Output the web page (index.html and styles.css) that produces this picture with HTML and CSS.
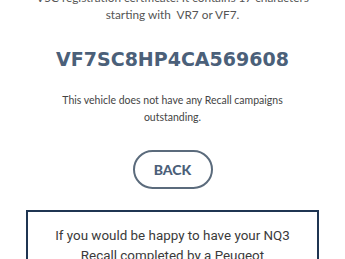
FILE: index.html
```html
<!DOCTYPE html>
<html lang="en">
<head>
    <meta charset="UTF-8">
    <meta name="viewport" content="width=device-width, initial-scale=1.0">
    <title>Recall check</title>
    <link rel="stylesheet" href="styles.css">
</head>
<body>
    <div class="page">
        <!-- VIN hint -->
        <p class="hint">V5C registration certificate. It contains 17 characters<br>starting with&nbsp; VR7 or VF7.</p>

        <!-- Result -->
        <div class="vin">VF7SC8HP4CA569608</div>
        <p class="result">This vehicle does not have any Recall campaigns<br>outstanding.</p>

        <button class="back-btn" type="button">BACK</button>

        <!-- Dealer box -->
        <div class="dealer-box">
            <p>If you would be happy to have your NQ3<br>Recall completed by a Peugeot</p>
        </div>
    </div>
</body>
</html>
```

FILE: styles.css
```css
* {
    box-sizing: border-box;
    margin: 0;
    padding: 0;
}

body {
    font-family: Lato, 'DejaVu Sans', sans-serif;
    background-color: #fff;
    overflow: hidden;
}

.page {
    display: flex;
    flex-direction: column;
    align-items: center;
    text-align: center;
}

.hint {
    margin-top: -11px;
    font-size: 11.8px;
    line-height: 17px;
    color: #555;
    white-space: nowrap;
}

.vin {
    margin-top: 24px;
    font-family: 'DejaVu Sans', sans-serif;
    font-size: 19px;
    line-height: 24px;
    font-weight: bold;
    color: #4b6079;
}

.result {
    margin-top: 21px;
    font-size: 10.5px;
    line-height: 17px;
    color: #444;
}

.back-btn {
    margin-top: 24px;
    width: 80px;
    height: 39px;
    border: 2px solid #5b6b7c;
    border-radius: 20px;
    background: #fff;
    font-family: Lato, sans-serif;
    font-size: 14px;
    font-weight: 900;
    color: #4b6079;
}

.dealer-box {
    margin-top: 21px;
    align-self: stretch;
    margin-left: 26px;
    margin-right: 26px;
    border: 2px solid #1f3552;
    padding-top: 14px;
    font-family: Roboto, sans-serif;
    font-size: 13.4px;
    line-height: 20px;
    color: #3a3a3a;
}
```
